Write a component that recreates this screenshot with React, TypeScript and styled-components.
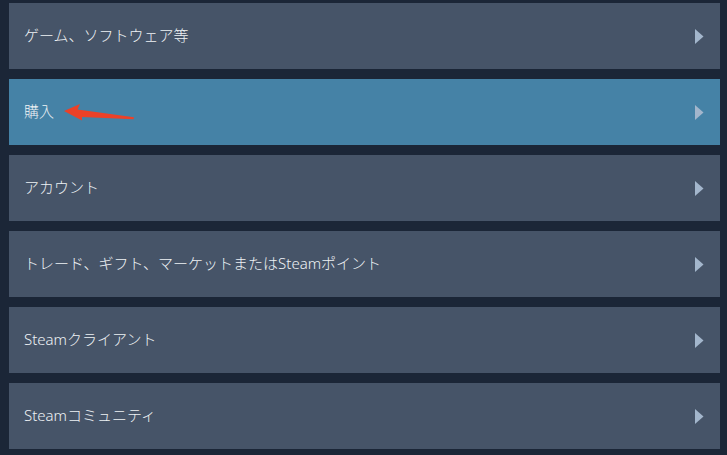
import React, { ReactElement } from 'react';
import styled, { createGlobalStyle } from 'styled-components';

const GlobalStyle = createGlobalStyle`
  html, body {
    margin: 0;
    padding: 0;
    background: #1b2637;
  }
`;

const Page = styled.div`
  width: 727px;
  height: 455px;
  box-sizing: border-box;
  padding: 3px 7px 0 9px;
  display: flex;
  flex-direction: column;
  gap: 10px;
  background: #1b2637;
  font-family: 'Noto Sans', 'Noto Sans CJK JP', sans-serif;
  overflow: hidden;
`;

const Row = styled.div<{ $active?: boolean }>`
  position: relative;
  height: 66px;
  flex-shrink: 0;
  display: flex;
  align-items: center;
  justify-content: space-between;
  padding: 0 16px 0 15px;
  background: ${p => (p.$active ? '#4582a6' : '#465468')};
  color: #eef2f5;
  font-size: 15px;
  font-weight: 300;
  cursor: pointer;
`;

const Label = styled.span`
  line-height: 1;
  margin-top: -1px;
`;

const Chevron = styled.svg`
  width: 10px;
  height: 15px;
  fill: #a3b6cc;
`;

const Pointer = styled.svg`
  position: absolute;
  left: 51px;
  top: 22px;
  width: 80px;
  height: 22px;
  fill: #ec4128;
`;

const items = [
  'ゲーム、ソフトウェア等',
  '購入',
  'アカウント',
  'トレード、ギフト、マーケットまたはSteamポイント',
  'Steamクライアント',
  'Steamコミュニティ',
];

const App = (): ReactElement => (
  <>
    <GlobalStyle />
    <Page>
      {items.map((text, i) => (
        <Row key={text} $active={i === 1}>
          <Label>{text}</Label>
          <Chevron viewBox="0 0 10 15">
            <path d="M1 0 L9.5 7.5 L1 15 Z" />
          </Chevron>
          {i === 1 && (
            <Pointer viewBox="0 0 80 22">
              <path d="M4 10 L20 3 L17.5 8.5 L74 16.2 L73.5 18.3 L22 16 L22 19.5 Z" />
            </Pointer>
          )}
        </Row>
      ))}
    </Page>
  </>
);

export default App;
